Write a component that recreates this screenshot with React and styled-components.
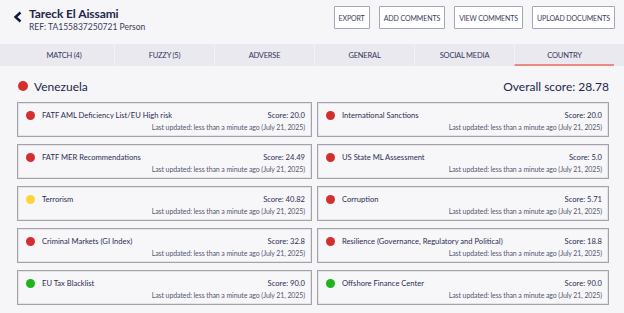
import React from "react";
import styled, { createGlobalStyle } from "styled-components";

const GlobalStyle = createGlobalStyle`
  body {
    margin: 0;
    background: #f6f6f9;
    font-family: Lato, "Open Sans", sans-serif;
    color: #2b2d4f;
  }
`;

const Page = styled.div`
  width: 624px;
  height: 313px;
  overflow: hidden;
  background: #f6f6f9;
`;

const Header = styled.div`
  display: flex;
  justify-content: space-between;
  align-items: flex-start;
  height: 44px;
  padding: 6px 9px 0 13px;
  box-sizing: border-box;
`;

const Identity = styled.div`
  display: flex;
  align-items: flex-start;
  gap: 6px;
`;

const BackIcon = styled.svg`
  margin-top: 5px;
  flex: none;
`;

const Name = styled.div`
  font-size: 12px;
  font-weight: 700;
  color: #23264a;
  line-height: 16px;
  letter-spacing: -0.1px;
`;

const Ref = styled.div`
  font-size: 8.5px;
  color: #3a3c5a;
  line-height: 10px;
`;

const Actions = styled.div`
  display: flex;
  gap: 9px;
`;

const ActionButton = styled.button`
  height: 23px;
  padding: 0 4px;
  background: #fff;
  border: 1px solid #a4a6b8;
  border-radius: 1px;
  font-family: Lato, sans-serif;
  font-size: 7px;
  color: #3a3c5c;
  text-transform: uppercase;
  letter-spacing: -0.1px;
`;

const TabBar = styled.div`
  display: flex;
  height: 22px;
  padding-left: 14px;
  background: #e9e9ef;
`;

const Tab = styled.div`
  width: 100px;
  display: flex;
  align-items: center;
  justify-content: center;
  font-size: 7.5px;
  color: #33355a;
  letter-spacing: -0.2px;
  border-left: ${({ $first }) => ($first ? "none" : "1px solid #f3f3f7")};
  box-sizing: border-box;
  border-bottom: 2px solid ${({ $active }) => ($active ? "#ec8a82" : "transparent")};
  padding-top: 2px;
`;

const Content = styled.div`
  padding: 11px 15px 0 17px;
`;

const Summary = styled.div`
  display: flex;
  justify-content: space-between;
  align-items: center;
  height: 18px;
  margin-bottom: 7px;
`;

const Country = styled.div`
  display: flex;
  align-items: center;
  gap: 6px;
  font-size: 12px;
  color: #23264a;
  padding-left: 1px;
`;

const Overall = styled.div`
  font-size: 12px;
  color: #23264a;
`;

const Dot = styled.span`
  flex: none;
  width: ${({ $size }) => $size}px;
  height: ${({ $size }) => $size}px;
  border-radius: 50%;
  background: ${({ $color }) => $color};
`;

const Grid = styled.div`
  display: grid;
  grid-template-columns: 295px 292px;
  column-gap: 5px;
  row-gap: 7px;
`;

const Card = styled.div`
  height: 35px;
  box-sizing: border-box;
  border: 1px solid #a2a2a8;
  box-shadow: inset 0 0 0 1px #e4e4e8;
  background: #f7f7fa;
  padding: 5px 6px 0 8px;
`;

const CardTop = styled.div`
  display: flex;
  align-items: center;
  gap: 7px;
  height: 14px;
`;

const CardTitle = styled.div`
  flex: 1;
  font-size: 7.6px;
  color: #2b2d52;
  white-space: nowrap;
`;

const Score = styled.div`
  font-size: 7.6px;
  color: #2b2d52;
`;

const Updated = styled.div`
  text-align: right;
  font-size: 7px;
  color: #55576e;
  margin-top: 1px;
  letter-spacing: -0.1px;
`;

const RED = "#d32f2f";
const YELLOW = "#fcd43a";
const GREEN = "#1db41d";

const factors = [
  { title: "FATF AML Deficiency List/EU High risk", score: "20.0", color: RED },
  { title: "International Sanctions", score: "20.0", color: RED },
  { title: "FATF MER Recommendations", score: "24.49", color: RED },
  { title: "US State ML Assessment", score: "5.0", color: RED },
  { title: "Terrorism", score: "40.82", color: YELLOW },
  { title: "Corruption", score: "5.71", color: RED },
  { title: "Criminal Markets (GI Index)", score: "32.8", color: RED },
  { title: "Resilience (Governance, Regulatory and Political)", score: "18.8", color: RED },
  { title: "EU Tax Blacklist", score: "90.0", color: GREEN },
  { title: "Offshore Finance Center", score: "90.0", color: GREEN },
];

const tabs = ["MATCH (4)", "FUZZY (5)", "ADVERSE", "GENERAL", "SOCIAL MEDIA", "COUNTRY"];

export default function App() {
  return (
    <Page>
      <GlobalStyle />
      <Header>
        <Identity>
          <BackIcon width="10" height="12" viewBox="0 0 10 12">
            <polyline points="7.5,1.5 2.5,6 7.5,10.5" fill="none" stroke="#15173a" strokeWidth="2.4" />
          </BackIcon>
          <div>
            <Name>Tareck El Aissami</Name>
            <Ref>REF: TA155837250721 Person</Ref>
          </div>
        </Identity>
        <Actions>
          <ActionButton>Export</ActionButton>
          <ActionButton>Add comments</ActionButton>
          <ActionButton>View comments</ActionButton>
          <ActionButton>Upload documents</ActionButton>
        </Actions>
      </Header>
      <TabBar>
        {tabs.map((t, i) => (
          <Tab key={t} $first={i === 0} $active={t === "COUNTRY"}>
            {t}
          </Tab>
        ))}
      </TabBar>
      <Content>
        <Summary>
          <Country>
            <Dot $size={10} $color={RED} />
            Venezuela
          </Country>
          <Overall>Overall score: 28.78</Overall>
        </Summary>
        <Grid>
          {factors.map((f) => (
            <Card key={f.title}>
              <CardTop>
                <Dot $size={9} $color={f.color} />
                <CardTitle>{f.title}</CardTitle>
                <Score>Score: {f.score}</Score>
              </CardTop>
              <Updated>Last updated: less than a minute ago (July 21, 2025)</Updated>
            </Card>
          ))}
        </Grid>
      </Content>
    </Page>
  );
}
